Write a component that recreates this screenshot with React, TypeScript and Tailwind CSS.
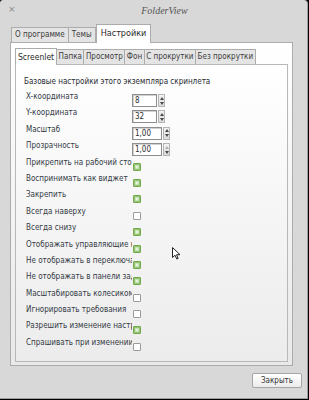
import React from "react";

const font = "font-['DejaVu_Sans_Condensed','DejaVu_Sans',sans-serif]";

function Check({ on }: { on: boolean }) {
  if (on) {
    return (
      <div className="w-[8px] h-[8px] mt-[5px] ml-[1px] shrink-0 rounded-[1px] border border-[#74a84f] bg-[#93c46f] flex items-center justify-center">
        <div className="w-[4px] h-[4px] bg-[#e6f2dc] border border-[#c8e0b6]" />
      </div>
    );
  }
  return (
    <div className="w-[8px] h-[8px] mt-[5px] ml-[1px] shrink-0 rounded-[1px] border border-[#9a9a9a] bg-white" />
  );
}

function Spin({ value, wide, disabledUp }: { value: string; wide?: boolean; disabledUp?: boolean }) {
  return (
    <div className="flex mt-[2px] h-[13px]">
      <div
        className={`${wide ? "w-[30px]" : "w-[25px]"} h-[13px] border border-[#8e8e8e] bg-white text-[8px] leading-[11px] pl-[2px] text-[#2c2c2c] shadow-[inset_1px_1px_0_#d0d0d0]`}
      >
        {value}
      </div>
      <div className="w-[7px] h-[13px] ml-[1px] border border-[#b4b4b4] bg-gradient-to-b from-[#f4f4f4] to-[#dcdcdc] flex flex-col items-center justify-center gap-[2px]">
        <svg width="4" height="3" viewBox="0 0 4 3">
          <path d="M0 3 L2 0 L4 3 Z" fill={disabledUp ? "#b0b0b0" : "#4a4a4a"} />
        </svg>
        <svg width="4" height="3" viewBox="0 0 4 3">
          <path d="M0 0 L2 3 L4 0 Z" fill="#4a4a4a" />
        </svg>
      </div>
    </div>
  );
}

const spins: [string, string, boolean, boolean][] = [
  ["X-координата", "8", false, false],
  ["Y-координата", "32", false, false],
  ["Масштаб", "1,00", true, false],
  ["Прозрачность", "1,00", true, true],
];

const checks: [string, boolean][] = [
  ["Прикрепить на рабочий стол", true],
  ["Воспринимать как виджет", true],
  ["Закрепить", true],
  ["Всегда наверху", false],
  ["Всегда снизу", true],
  ["Отображать управляющие кнопки", true],
  ["Не отображать в переключателе", true],
  ["Не отображать в панели задач", true],
  ["Масштабировать колесиком", false],
  ["Игнорировать требования", false],
  ["Разрешить изменение настроек", true],
  ["Спрашивать при изменении", false],
];

export default function App() {
  return (
    <div className={`w-[309px] h-[400px] bg-black ${font} text-[8px] text-[#333a44] relative overflow-hidden`}>
      <div className="w-[308px] h-[399px] rounded-tr-[4px] rounded-tl-[3px] bg-[#d8d8d8] border-r border-b border-[#9e9e9e] flex flex-col">
        {/* title bar */}
        <div className="h-[20px] flex items-center relative shrink-0">
          <span className="w-[20px] pl-[8px] text-[#8a8a8a] text-[9px] font-['DejaVu_Sans',sans-serif]">×</span>
          <div className="flex-1 flex justify-center pr-[8px]">
            <span className="font-['Liberation_Serif',serif] italic text-[10px] text-[#555] ml-[10px]">FolderView</span>
          </div>
        </div>
        {/* body */}
        <div className="flex-1 flex flex-col pl-[10px] pr-[15px]">
          {/* outer tabs */}
          <div className="flex items-end h-[22px] pl-[1px] shrink-0">
            <div className="h-[15px] px-[3px] bg-[#e4e4e4] border border-b-0 border-[#acacac] text-[#3c3c3c] flex items-center">О программе</div>
            <div className="h-[15px] px-[3px] bg-[#e4e4e4] border border-b-0 border-l-0 border-[#acacac] text-[#3c3c3c] flex items-center">Темы</div>
            <div className="h-[19px] px-[4px] bg-white border border-b-0 border-[#acacac] text-[9px] text-[#2a2a2a] flex items-center -mb-[1px] relative z-10">Настройки</div>
          </div>
          {/* outer page */}
          <div className="h-[324px] w-[283px] border border-[#acacac] bg-gradient-to-b from-white to-[#e9e9e9] px-[4px] pt-[4px] flex flex-col">
            {/* inner tabs */}
            <div className="flex items-end h-[17px] shrink-0">
              <div className="h-[17px] px-[2px] bg-white border border-b-0 border-[#acacac] text-[#2a2a2a] text-[8.5px] flex items-center -mb-[1px] relative z-10">Screenlet</div>
              <div className="h-[15px] px-[1.5px] bg-[#e4e4e4] border border-b-0 border-l-0 border-[#acacac] text-[#3c3c3c] flex items-center">Папка</div>
              <div className="h-[15px] px-[1.5px] bg-[#e4e4e4] border border-b-0 border-l-0 border-[#acacac] text-[#3c3c3c] flex items-center">Просмотр</div>
              <div className="h-[15px] px-[1.5px] bg-[#e4e4e4] border border-b-0 border-l-0 border-[#acacac] text-[#3c3c3c] flex items-center">Фон</div>
              <div className="h-[15px] px-[1.5px] bg-[#e4e4e4] border border-b-0 border-l-0 border-[#acacac] text-[#3c3c3c] flex items-center">С прокрутки</div>
              <div className="h-[15px] px-[1.5px] bg-[#e4e4e4] border border-b-0 border-l-0 border-[#acacac] text-[#3c3c3c] flex items-center">Без прокрутки</div>
            </div>
            {/* inner page */}
            <div className="flex-1 mb-[3px] border border-[#b8b8b8] bg-gradient-to-b from-white to-[#ececec] pt-[12px] pl-[8px]">
              <div className="leading-[10px] text-[#262a30]">Базовые настройки этого экземпляра скринлета</div>
              <div className="mt-[5px] pl-[2px] flex flex-col">
                {spins.map(([l, v, w, d]) => (
                  <div key={l} className="h-[16.4px] flex items-start">
                    <div className="w-[106px] overflow-hidden whitespace-nowrap leading-[10px]">{l}</div>
                    <Spin value={v} wide={w} disabledUp={d} />
                  </div>
                ))}
                {checks.map(([l, on]) => (
                  <div key={l} className="h-[16.4px] flex items-start">
                    <div className="w-[106px] overflow-hidden whitespace-nowrap leading-[10px]">{l}</div>
                    <Check on={on} />
                  </div>
                ))}
              </div>
            </div>
          </div>
          {/* button row */}
          <div className="flex justify-end pt-[7px] -mr-[10px]">
            <div className="w-[50px] h-[15px] rounded-[2px] border border-[#a6a6a6] bg-gradient-to-b from-white to-[#ececec] flex items-center justify-center text-[#333]">
              Закрыть
            </div>
          </div>
        </div>
      </div>
      {/* mouse cursor */}
      <svg className="absolute left-[172px] top-[247px]" width="9" height="13" viewBox="0 0 9 13">
        <path d="M0.5 0.5 L0.5 10.5 L3 8.2 L4.8 12 L6.2 11.4 L4.5 7.7 L8 7.7 Z" fill="white" stroke="#222" strokeWidth="1" strokeLinejoin="round" />
      </svg>
    </div>
  );
}
